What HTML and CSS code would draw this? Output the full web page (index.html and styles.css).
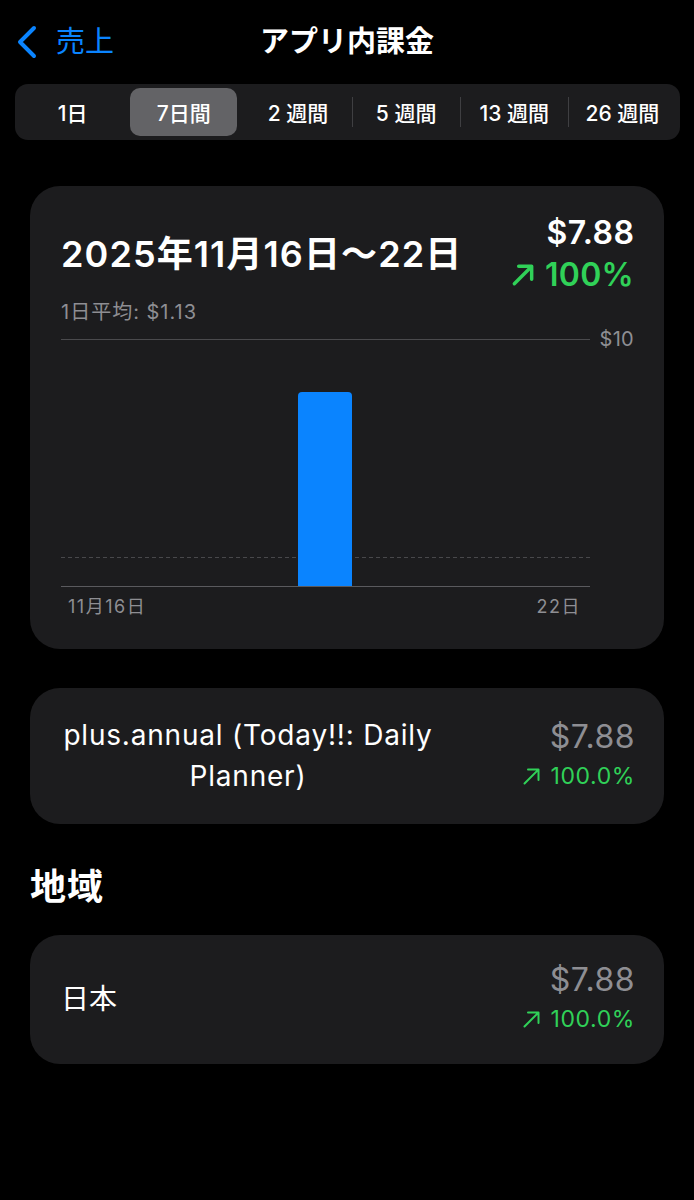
FILE: index.html
```html
<!DOCTYPE html>
<html lang="ja">
<head>
<meta charset="utf-8">
<title>アプリ内課金</title>
<link rel="stylesheet" href="styles.css">
</head>
<body>
<div class="screen">
  <header class="nav">
    <div class="back">
      <svg class="chevron" viewBox="0 0 22 34" width="22" height="34"><path d="M18 3 L4 17 L18 31" fill="none" stroke="currentColor" stroke-width="4" stroke-linecap="round" stroke-linejoin="round"/></svg>
      <span>売上</span>
    </div>
    <h1 class="title">アプリ内課金</h1>
    <div></div>
  </header>

  <div class="seg">
    <div class="seg-item">1日</div>
    <span class="seg-div hidden"></span>
    <div class="seg-item active">7日間</div>
    <span class="seg-div hidden"></span>
    <div class="seg-item">2 週間</div>
    <span class="seg-div"></span>
    <div class="seg-item">5 週間</div>
    <span class="seg-div"></span>
    <div class="seg-item">13 週間</div>
    <span class="seg-div"></span>
    <div class="seg-item">26 週間</div>
  </div>

  <section class="card chart-card">
    <div class="summary">
      <div class="period">2025年11月16日〜22日</div>
      <div class="totals">
        <div class="total">$7.88</div>
        <div class="change-big">
          <svg class="arrow" viewBox="0 0 24 24" width="26" height="26"><path d="M4 20 L19 5 M8 4 H20 V16" fill="none" stroke="currentColor" stroke-width="3.2" stroke-linecap="round" stroke-linejoin="round"/></svg>
          <span>100%</span>
        </div>
      </div>
    </div>
    <div class="avg">1日平均: $1.13</div>
    <div class="chart">
      <div class="plot">
        <div class="avg-line"></div>
        <div class="slot"></div>
        <div class="slot"></div>
        <div class="slot"></div>
        <div class="slot"><div class="bar" style="height:194px"></div></div>
        <div class="slot"></div>
        <div class="slot"></div>
        <div class="slot"></div>
      </div>
      <div class="y-axis">$10</div>
    </div>
    <div class="x-axis">
      <span>11月16日</span>
      <span>22日</span>
    </div>
  </section>

  <section class="card row-card">
    <div class="product">plus.annual (Today!!: Daily Planner)</div>
    <div class="metrics">
      <div class="amount">$7.88</div>
      <div class="pct">
        <svg class="arrow-sm" viewBox="0 0 24 24" width="21" height="21"><path d="M4 20 L19 5 M8 4 H20 V16" fill="none" stroke="currentColor" stroke-width="2.3" stroke-linecap="round" stroke-linejoin="round"/></svg>
        <span>100.0%</span>
      </div>
    </div>
  </section>

  <h2 class="section">地域</h2>

  <section class="card row-card region-card">
    <div class="region">日本</div>
    <div class="metrics">
      <div class="amount">$7.88</div>
      <div class="pct">
        <svg class="arrow-sm" viewBox="0 0 24 24" width="21" height="21"><path d="M4 20 L19 5 M8 4 H20 V16" fill="none" stroke="currentColor" stroke-width="2.3" stroke-linecap="round" stroke-linejoin="round"/></svg>
        <span>100.0%</span>
      </div>
    </div>
  </section>
</div>
</body>
</html>
```

FILE: styles.css
```css
* { box-sizing: border-box; }

body {
  margin: 0;
  background: #000;
  color: #fff;
  font-family: Inter, "Noto Sans CJK JP", sans-serif;
}

.screen {
  width: 694px;
  min-height: 1200px;
  background: #000;
}

/* Navigation bar */
.nav {
  display: grid;
  grid-template-columns: 1fr auto 1fr;
  align-items: center;
  height: 84px;
}

.back {
  display: flex;
  align-items: center;
  gap: 18px;
  padding-left: 16px;
  color: #0a84ff;
  font-size: 29px;
  line-height: 34px;
}

.chevron { display: block; }

.title {
  margin: 0;
  font-size: 29px;
  font-weight: 600;
  line-height: 36px;
}

/* Segmented control */
.seg {
  display: flex;
  align-items: center;
  height: 56px;
  margin: 0 14px 0 15px;
  padding: 0 4px;
  background: #1c1c1e;
  border-radius: 13px;
}

.seg-item {
  flex: 1;
  height: 48px;
  display: flex;
  align-items: center;
  justify-content: center;
  font-size: 21px;
  font-weight: 500;
  border-radius: 10px;
  white-space: nowrap;
}

.seg-item.active {
  background: #636366;
  margin: 0 6px 0 3px;
}

.seg-div {
  width: 1px;
  height: 30px;
  background: #3f3f42;
}

.seg-div.hidden { background: transparent; }

/* Cards */
.card {
  margin: 0 30px;
  background: #1c1c1e;
  border-radius: 30px;
}

.chart-card {
  margin-top: 46px;
  padding: 26px 30px 30px 31px;
}

.summary {
  display: flex;
  justify-content: space-between;
  align-items: center;
}

.period {
  font-size: 36px;
  font-weight: 600;
  line-height: 44px;
  letter-spacing: 1.1px;
}

.totals { text-align: right; }

.total {
  font-size: 32px;
  font-weight: 600;
  line-height: 42px;
  letter-spacing: 0.5px;
  margin-right: -0.5px;
}

.change-big {
  display: flex;
  align-items: center;
  justify-content: flex-end;
  gap: 9px;
  color: #30d158;
  font-size: 32px;
  font-weight: 600;
  line-height: 42px;
  letter-spacing: 0.3px;
}

.arrow, .arrow-sm { display: block; }

.avg {
  margin-top: 4px;
  color: #8e8e93;
  font-size: 20px;
  line-height: 24px;
  letter-spacing: 1px;
}

.chart {
  display: flex;
  margin-top: 15px;
}

.plot {
  position: relative;
  width: 529px;
  height: 248px;
  border-top: 1px solid #4a4a4d;
  border-bottom: 1px solid #5a5a5e;
  display: grid;
  grid-template-columns: repeat(7, 1fr);
  align-items: end;
}

.slot {
  position: relative;
  display: flex;
  justify-content: center;
  align-items: flex-end;
  height: 100%;
}

.bar {
  width: 54px;
  background: #0a84ff;
  border-radius: 4px 4px 0 0;
}

.avg-line {
  position: absolute;
  left: 0;
  right: 0;
  bottom: 28px;
  height: 1px;
  background: repeating-linear-gradient(90deg, #48484b 0 4px, transparent 4px 7px);
}

.y-axis {
  flex: 1;
  margin-top: -12px;
  text-align: right;
  color: #8e8e93;
  font-size: 20px;
  line-height: 24px;
  letter-spacing: 0.3px;
}

.x-axis {
  display: flex;
  justify-content: space-between;
  width: 529px;
  margin-top: 8px;
  padding: 0 9px 0 7px;
  color: #8e8e93;
  font-size: 18px;
  line-height: 24px;
  letter-spacing: 1.5px;
}

/* Row cards */
.row-card {
  display: flex;
  align-items: center;
  margin-top: 39px;
  padding: 27px 30px 27px 31px;
}

.product {
  width: 374px;
  text-align: center;
  font-size: 28px;
  line-height: 41px;
  letter-spacing: 0.8px;
}

.metrics {
  flex: 1;
  text-align: right;
}

.amount {
  color: #8e8e93;
  font-size: 32px;
  line-height: 40px;
  letter-spacing: 0.5px;
  margin-right: -1px;
}

.pct {
  display: flex;
  align-items: center;
  justify-content: flex-end;
  gap: 8px;
  color: #30d158;
  font-size: 23px;
  line-height: 38px;
  letter-spacing: 0.6px;
  margin-right: -1px;
}

.section {
  margin: 41px 30px 26px;
  font-size: 36px;
  font-weight: 700;
  line-height: 44px;
  letter-spacing: 1px;
}

.region-card {
  margin-top: 0;
  padding: 25px 30px 26px 31px;
}

.region {
  flex: 1;
  font-size: 28px;
  line-height: 40px;
}
```
